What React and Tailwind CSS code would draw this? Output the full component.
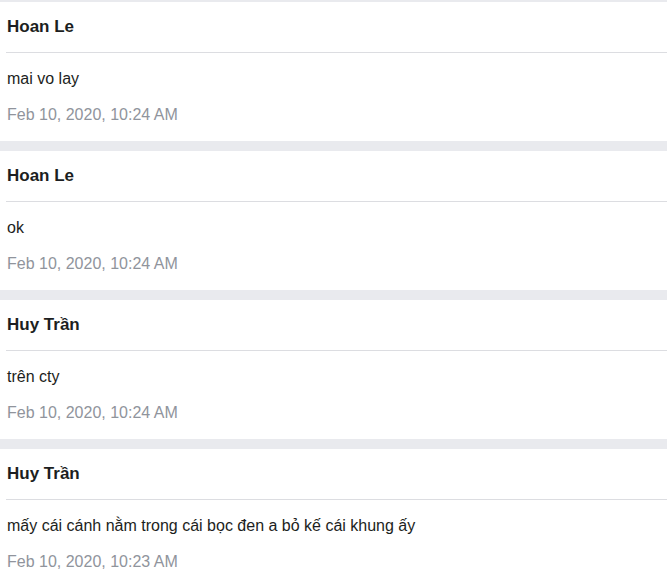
import React from 'react';

const comments = [
  { name: 'Hoan Le', text: 'mai vo lay', time: 'Feb 10, 2020, 10:24 AM' },
  { name: 'Hoan Le', text: 'ok', time: 'Feb 10, 2020, 10:24 AM' },
  { name: 'Huy Trần', text: 'trên cty', time: 'Feb 10, 2020, 10:24 AM' },
  { name: 'Huy Trần', text: 'mấy cái cánh nằm trong cái bọc đen a bỏ kế cái khung ấy', time: 'Feb 10, 2020, 10:23 AM' },
];

function CommentCard({ item }) {
  return (
    <div className="bg-white pl-[6px]">
      <div className="h-[51px] flex items-center border-b border-[#dcdde1] pl-px pb-px">
        <span className="text-[17px] font-bold text-[#1c1e21]">{item.name}</span>
      </div>
      <div className="pl-px pt-[16px] pb-[16px]">
        <p className="text-[16px] leading-[20px] text-[#1c1e21]">{item.text}</p>
        <p className="mt-[16px] text-[16px] leading-[20px] text-[#90949c]">{item.time}</p>
      </div>
    </div>
  );
}

export default function App() {
  return (
    <div className="min-h-screen bg-[#e9eaee] pt-[2px] flex flex-col gap-[10px]" style={{ fontFamily: '"Liberation Sans", Arial, sans-serif' }}>
      {comments.map((c, i) => (
        <CommentCard key={i} item={c} />
      ))}
    </div>
  );
}
